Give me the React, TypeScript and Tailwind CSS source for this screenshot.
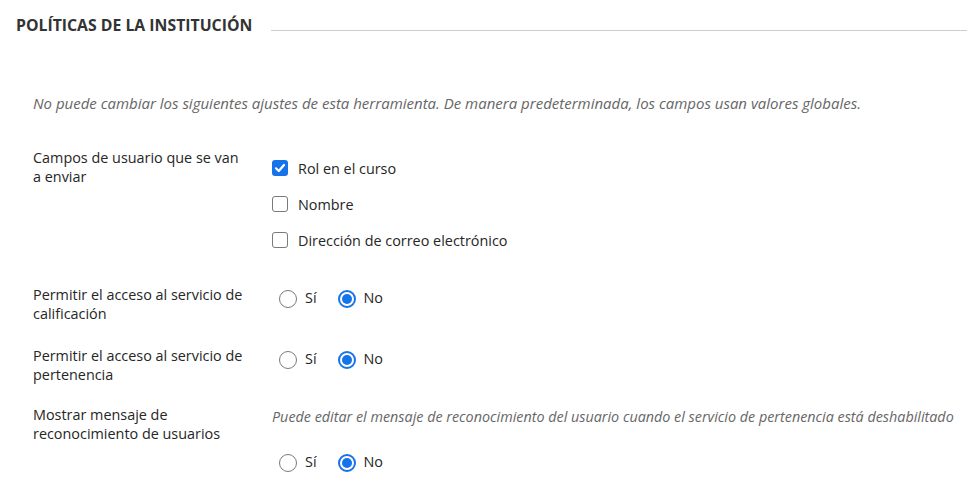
import React from "react";

const font = { fontFamily: '"Open Sans", "Noto Sans", sans-serif' };

function Check({ checked, label }: { checked?: boolean; label: string }) {
  return (
    <div className="flex items-center h-[20px]">
      {checked ? (
        <span className="w-[16px] h-[16px] rounded-[3px] bg-[#1673ea] flex items-center justify-center">
          <svg width="12" height="12" viewBox="0 0 12 12" fill="none">
            <path d="M2 6.3 L4.8 9 L10 3" stroke="white" strokeWidth="2.2" strokeLinecap="round" strokeLinejoin="round" />
          </svg>
        </span>
      ) : (
        <span className="w-[16px] h-[16px] rounded-[3px] border-[1.5px] border-[#7a7a7a] bg-white" />
      )}
      <span className="ml-[10px] text-[14.4px] text-[#262626]">{label}</span>
    </div>
  );
}

function Radio({ checked, label }: { checked?: boolean; label: string }) {
  return (
    <div className="flex items-center h-[20px]">
      {checked ? (
        <span className="w-[18px] h-[18px] rounded-full border-2 border-[#1673ea] flex items-center justify-center bg-white">
          <span className="w-[10px] h-[10px] rounded-full bg-[#1673ea]" />
        </span>
      ) : (
        <span className="w-[18px] h-[18px] rounded-full border-[1.5px] border-[#7a7a7a] bg-white" />
      )}
      <span className="ml-[8px] text-[14.4px] text-[#262626] -mt-[4px]">{label}</span>
    </div>
  );
}

function YesNo() {
  return (
    <div className="flex items-center ml-[7px] gap-[21px]">
      <Radio label="Sí" />
      <Radio checked label="No" />
    </div>
  );
}

export default function App() {
  return (
    <div className="w-[967px] h-[494px] bg-white overflow-hidden" style={font}>
      <div className="flex items-end pt-[14px] pl-[16px]">
        <h2 className="text-[15.8px] font-bold leading-[22px] text-[#333333] whitespace-nowrap">
          POLÍTICAS DE LA INSTITUCIÓN
        </h2>
        <div className="flex-1 h-px bg-[#cdcdcd] ml-[19px] mb-[5px]" />
      </div>

      <div className="pl-[33px]">
        <p className="mt-[57px] text-[15px] italic leading-[20px] text-[#666666] whitespace-nowrap">
          No puede cambiar los siguientes ajustes de esta herramienta. De manera predeterminada, los campos usan valores globales.
        </p>

        <div className="grid grid-cols-[213px_1fr] gap-x-[26px] mt-[35px] text-[14.4px] leading-[19px] text-[#262626]">
          <div>Campos de usuario que se van a enviar</div>
          <div className="pt-[10px] flex flex-col gap-[16px]">
            <Check checked label="Rol en el curso" />
            <Check label="Nombre" />
            <Check label="Dirección de correo electrónico" />
          </div>

          <div className="mt-[35px]">Permitir el acceso al servicio de calificación</div>
          <div className="mt-[35px] pt-[4px]">
            <YesNo />
          </div>

          <div className="mt-[23px]">Permitir el acceso al servicio de pertenencia</div>
          <div className="mt-[23px] pt-[4px]">
            <YesNo />
          </div>

          <div className="mt-[21px]">Mostrar mensaje de reconocimiento de usuarios</div>
          <div className="mt-[21px]">
            <p className="italic text-[14.35px] text-[#666666] leading-[20px] whitespace-nowrap pt-[2px]">
              Puede editar el mensaje de reconocimiento del usuario cuando el servicio de pertenencia está deshabilitado
            </p>
            <div className="mt-[26px]">
              <YesNo />
            </div>
          </div>
        </div>
      </div>
    </div>
  );
}
